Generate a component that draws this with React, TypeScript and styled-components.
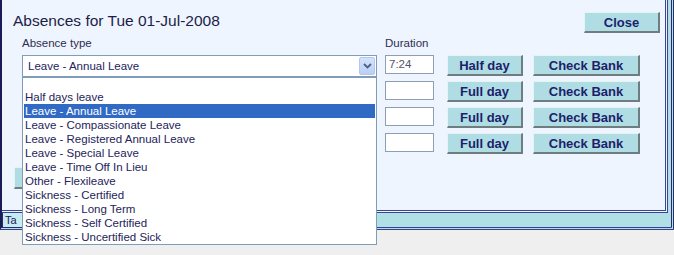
import React from "react";
import styled, { createGlobalStyle } from "styled-components";

const Global = createGlobalStyle`
  html, body { margin: 0; padding: 0; background: #eeeeee; }
  body { font-family: "Liberation Sans", Arial, sans-serif; }
  * { box-sizing: border-box; }
`;

const Window = styled.div`
  width: 674px;
  height: 255px;
  overflow: hidden;
  background: #efefef;
  display: flex;
  flex-direction: column;
`;

const Frame = styled.div`
  height: 230px;
  flex: 0 0 230px;
  background: #b0e0e6;
  border-left: 2px solid #1b1b55;
  border-right: 3px double #2a2a6c;
  border-bottom: 3px double #3a3f8c;
  display: flex;
  flex-direction: column;
`;

const Panel = styled.div`
  height: 213px;
  flex: 0 0 213px;
  margin-right: 3px;
  background: #eef5fe;
  border-right: 3px double #3a4592;
  border-bottom: 3px double #3a4592;
  padding: 12px 5px 0 0;
  display: flex;
  flex-direction: column;
`;

const Header = styled.div`
  display: flex;
  justify-content: space-between;
  align-items: flex-start;
  padding-left: 11px;
`;

const Title = styled.h1`
  margin: 0;
  font-weight: normal;
  font-size: 15.5px;
  line-height: 17px;
  color: #1d1d48;
`;

const Form = styled.div`
  display: grid;
  grid-template-columns: 363px 62px 86px 107px;
  grid-template-rows: 13px repeat(4, 21px);
  row-gap: 5px;
  margin-top: 4px;
  padding-left: 20px;
  align-items: start;
`;

const Label = styled.div<{ $col: number }>`
  grid-column: ${(p) => p.$col};
  font-size: 11.5px;
  line-height: 13px;
  color: #2e2e52;
`;

const SelectWrap = styled.div`
  position: relative;
  width: 355px;
  height: 22px;
`;

const SelectBox = styled.div`
  height: 22px;
  border: 1px solid #7f9db9;
  background: #ffffff;
  display: flex;
  align-items: center;
  padding-left: 5px;
  font-size: 11.5px;
  color: #24245a;
`;

const SelectText = styled.span`
  flex: 1;
`;

const ArrowBtn = styled.span`
  width: 16px;
  height: 18px;
  margin-right: 1px;
  background: linear-gradient(#d4e2fb, #b9cff5);
  border: 1px solid #b3c7ee;
  border-radius: 2px;
  display: flex;
  align-items: center;
  justify-content: center;
`;

const List = styled.ul`
  position: absolute;
  top: 100%;
  left: 0;
  width: 355px;
  margin: 0;
  padding: 0;
  list-style: none;
  background: #ffffff;
  border: 1px solid #7f9db9;
  z-index: 10;
`;

const Item = styled.li<{ $selected?: boolean; $blank?: boolean }>`
  height: ${(p) => (p.$blank ? 12 : 14)}px;
  line-height: 14px;
  margin: 0 1px;
  padding-left: 1px;
  font-size: 11.5px;
  white-space: nowrap;
  color: ${(p) => (p.$selected ? "#ffffff" : "#24245a")};
  background: ${(p) => (p.$selected ? "#316ac5" : "transparent")};
`;

const Input = styled.div`
  width: 49px;
  height: 19px;
  border: 1px solid #8e9fb5;
  background: #ffffff;
  font-size: 11.5px;
  line-height: 17px;
  padding-left: 3px;
  color: #55556a;
`;

const Button = styled.button<{ $w: number; $h?: number }>`
  width: ${(p) => p.$w}px;
  height: ${(p) => p.$h ?? 21}px;
  padding: 0;
  background: #b0dde3;
  border-style: solid;
  border-width: 1px 2px 2px 1px;
  border-color: #e4f3f4 #6e7d80 #6e7d80 #e4f3f4;
  font-family: "Liberation Sans", Arial, sans-serif;
  font-weight: bold;
  font-size: 13px;
  line-height: 17px;
  color: #1c1f6b;
  cursor: pointer;
`;

const AddBar = styled.div`
  margin-top: 13px;
  padding-left: 12px;
`;

const Strip = styled.div`
  flex: 1;
  display: flex;
  align-items: flex-start;
`;

const Tab = styled.div`
  width: 21px;
  height: 15px;
  overflow: hidden;
  white-space: nowrap;
  border: 1px solid #2a2a70;
  border-top: none;
  background: #c6ebf0;
  padding: 0 2px;
  font-size: 11px;
  line-height: 14px;
  color: #1a1a5a;
`;

const Chevron = () => (
  <svg width="9" height="6" viewBox="0 0 9 6">
    <path d="M1 1 L4.5 4.5 L8 1" fill="none" stroke="#4d6185" strokeWidth="1.8" />
  </svg>
);

const options = [
  "Half days leave",
  "Leave - Annual Leave",
  "Leave - Compassionate Leave",
  "Leave - Registered Annual Leave",
  "Leave - Special Leave",
  "Leave - Time Off In Lieu",
  "Other - Flexileave",
  "Sickness - Certified",
  "Sickness - Long Term",
  "Sickness - Self Certified",
  "Sickness - Uncertified Sick",
];

const rows = [
  { duration: "7:24", kind: "Half day" },
  { duration: "", kind: "Full day" },
  { duration: "", kind: "Full day" },
  { duration: "", kind: "Full day" },
];

export default function App() {
  return (
    <>
      <Global />
      <Window>
        <Frame>
          <Panel>
            <Header>
              <Title>Absences for Tue 01-Jul-2008</Title>
              <Button $w={76}>Close</Button>
            </Header>
            <Form>
              <Label $col={1}>Absence type</Label>
              <Label $col={2}>Duration</Label>
              <Label $col={3} />
              <Label $col={4} />
              {rows.map((r, i) => (
                <React.Fragment key={i}>
                  {i === 0 ? (
                    <SelectWrap>
                      <SelectBox>
                        <SelectText>Leave - Annual Leave</SelectText>
                        <ArrowBtn>
                          <Chevron />
                        </ArrowBtn>
                      </SelectBox>
                      <List>
                        <Item $blank />
                        {options.map((o) => (
                          <Item key={o} $selected={o === "Leave - Annual Leave"}>
                            {o}
                          </Item>
                        ))}
                      </List>
                    </SelectWrap>
                  ) : (
                    <div />
                  )}
                  <Input>{r.duration}</Input>
                  <Button $w={76}>{r.kind}</Button>
                  <Button $w={107}>Check Bank</Button>
                </React.Fragment>
              ))}
            </Form>
            <AddBar>
              <Button $w={75} $h={22} aria-label="Add" />
            </AddBar>
          </Panel>
          <Strip>
            <Tab>Ta</Tab>
          </Strip>
        </Frame>
      </Window>
    </>
  );
}
